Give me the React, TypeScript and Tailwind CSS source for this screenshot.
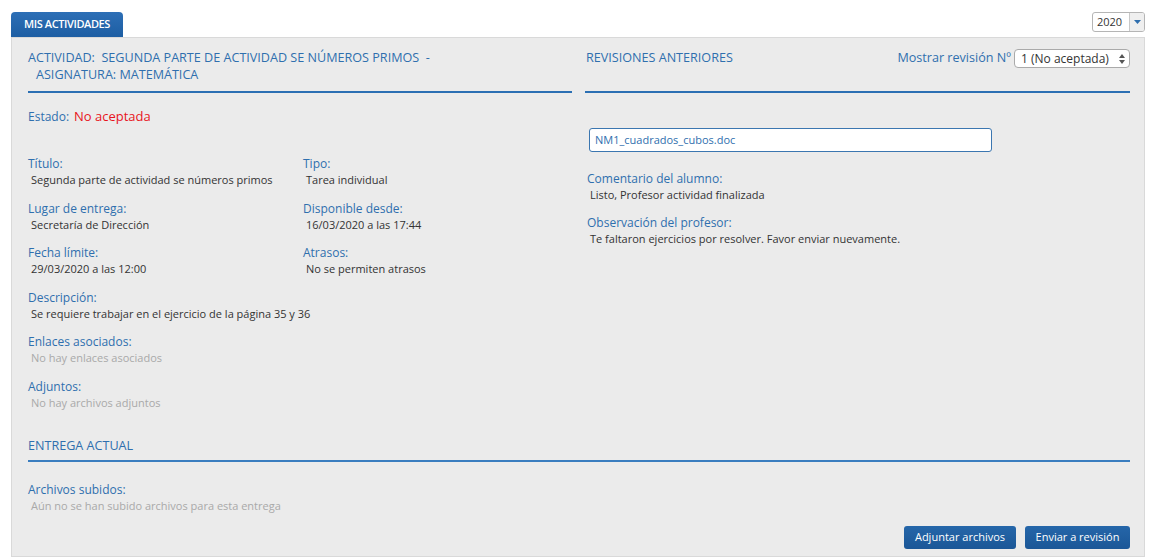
import React from "react";

const Label = ({ children }: { children: React.ReactNode }) => (
  <div className="text-[12px] leading-[16px] text-[#2f6fae]">{children}</div>
);
const Value = ({ children, muted }: { children: React.ReactNode; muted?: boolean }) => (
  <div className={`pl-[3px] text-[11px] leading-[16px] ${muted ? "text-[#a9a9a9]" : "text-[#333333]"}`}>{children}</div>
);

const Field = ({ label, value, muted, className = "" }: { label: string; value: string; muted?: boolean; className?: string }) => (
  <div className={className}>
    <Label>{label}</Label>
    <Value muted={muted}>{value}</Value>
  </div>
);

export default function App() {
  return (
    <div className="min-h-[557px] bg-white pt-[12px] pl-[11px] pr-[18px]" style={{ fontFamily: '"Open Sans", "DejaVu Sans", sans-serif' }}>
      <div className="flex items-end justify-between">
        <div className="h-[25px] w-[112px] rounded-t-[4px] bg-gradient-to-b from-[#2d6fb6] to-[#1d5ea3] flex items-center justify-center text-[11px] font-semibold text-white tracking-[-0.4px]">
          MIS ACTIVIDADES
        </div>
        <div className="mb-[5px] flex h-[20px] w-[53px] overflow-hidden rounded-[3px] border border-[#b5b5b5] bg-white">
          <div className="flex flex-1 items-center pl-[4px] text-[11px] text-[#333]">2020</div>
          <div className="flex w-[15px] items-center justify-center border-l border-[#c8c8c8] bg-[#efefef]">
            <svg width="7" height="4" viewBox="0 0 7 4"><path d="M0 0h7L3.5 4z" fill="#2f6fae" /></svg>
          </div>
        </div>
      </div>
      <div className="min-h-[520px] border border-[#d9d9d9] bg-[#ebebeb] pl-[16px] pr-[14px] pt-[11px]">
        <div className="grid grid-cols-[544px_545px] gap-x-[13px]">
          <div>
            <div className="h-[44px] border-b-2 border-[#2b6fb3] text-[12.6px] leading-[17px] text-[#2f6fae]">
              <div>ACTIVIDAD:&nbsp; SEGUNDA PARTE DE ACTIVIDAD SE NÚMEROS PRIMOS &nbsp;-</div>
              <div className="pl-[8px]">ASIGNATURA: MATEMÁTICA</div>
            </div>
            <div className="mt-[15px] flex items-baseline gap-[5px]">
              <span className="text-[12px] leading-[16px] text-[#2f6fae]">Estado:</span>
              <span className="text-[13px] leading-[16px] text-[#e8141c]">No aceptada</span>
            </div>
            <div className="mt-[31px] grid grid-cols-[275px_1fr] gap-y-[12.6px]">
              <Field label="Título:" value="Segunda parte de actividad se números primos" />
              <Field label="Tipo:" value="Tarea individual" />
              <Field label="Lugar de entrega:" value="Secretaría de Dirección" />
              <Field label="Disponible desde:" value="16/03/2020 a las 17:44" />
              <Field label="Fecha límite:" value="29/03/2020 a las 12:00" />
              <Field label="Atrasos:" value="No se permiten atrasos" />
            </div>
            <Field className="mt-[12.6px]" label="Descripción:" value="Se requiere trabajar en el ejercicio de la página 35 y 36" />
            <Field className="mt-[12.6px]" label="Enlaces asociados:" value="No hay enlaces asociados" muted />
            <Field className="mt-[12.6px]" label="Adjuntos:" value="No hay archivos adjuntos" muted />
          </div>
          <div>
            <div className="flex h-[44px] items-start justify-between border-b-2 border-[#2b6fb3]">
              <div className="text-[12.6px] leading-[17px] text-[#2f6fae] pl-[1px]">REVISIONES ANTERIORES</div>
              <div className="flex items-center gap-[3px]">
                <span className="text-[12.6px] text-[#2f6fae]">Mostrar revisión Nº</span>
                <div className="flex h-[19px] w-[116px] items-center justify-between rounded-[4px] border border-[#aaa] bg-white pl-[6px] pr-[4px] text-[12px] text-[#333]">
                  <span>1 (No aceptada)</span>
                  <svg width="6" height="10" viewBox="0 0 6 10"><path d="M0 4h6L3 0zM0 6h6L3 10z" fill="#555" /></svg>
                </div>
              </div>
            </div>
            <div className="ml-[4px] mt-[35px] flex h-[24px] w-[403px] items-center rounded-[3px] border border-[#3b76b0] bg-white pl-[5px] text-[11px] text-[#2f6fae]">
              NM1_cuadrados_cubos.doc
            </div>
            <Field className="ml-[2px] mt-[19px]" label="Comentario del alumno:" value="Listo, Profesor actividad finalizada" />
            <Field className="ml-[2px] mt-[12px]" label="Observación del profesor:" value="Te faltaron ejercicios por resolver. Favor enviar nuevamente." />
          </div>
        </div>
        <div className="mt-[27px] h-[24px] border-b-2 border-[#3a7dbf] text-[12.6px] leading-[16px] text-[#2f6fae]">ENTREGA ACTUAL</div>
        <Field className="mt-[20px]" label="Archivos subidos:" value="Aún no se han subido archivos para esta entrega" muted />
        <div className="mt-[12px] flex justify-end gap-[9px]">
          <button className="h-[23px] w-[112px] rounded-[3px] bg-gradient-to-b from-[#2566a9] to-[#1b5797] text-[11px] text-white">Adjuntar archivos</button>
          <button className="h-[23px] w-[105px] rounded-[3px] bg-gradient-to-b from-[#2566a9] to-[#1b5797] text-[11px] text-white">Enviar a revisión</button>
        </div>
      </div>
    </div>
  );
}
